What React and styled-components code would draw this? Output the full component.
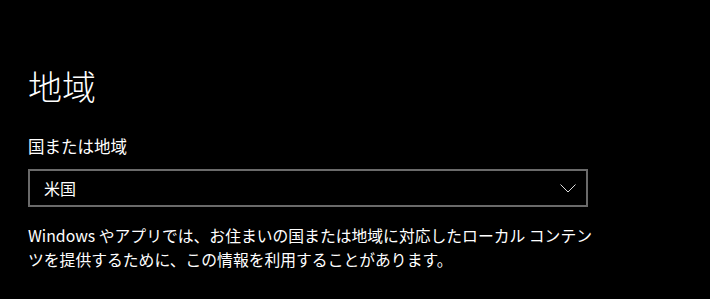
import React from "react";
import styled, { createGlobalStyle } from "styled-components";

const GlobalStyle = createGlobalStyle`
  html, body {
    margin: 0;
    padding: 0;
    background: #000;
  }
  body {
    font-family: "Noto Sans CJK JP", "Noto Sans", sans-serif;
    color: #fff;
  }
`;

const Page = styled.div`
  width: 710px;
  height: 299px;
  box-sizing: border-box;
  padding: 64px 0 0 28px;
  display: flex;
  flex-direction: column;
  overflow: hidden;
`;

const Title = styled.h1`
  margin: 0;
  font-size: 34px;
  font-weight: 300;
  line-height: 44px;
  color: #fff;
`;

const Label = styled.div`
  margin-top: 27px;
  font-size: 16.5px;
  line-height: 22px;
  color: #fff;
`;

const Select = styled.div`
  margin-top: 12px;
  width: 560px;
  height: 38px;
  box-sizing: border-box;
  border: 2px solid #6a6a6a;
  display: flex;
  align-items: center;
  justify-content: space-between;
  padding: 0 10px 0 14px;
  font-size: 16px;
  color: #fff;
`;

const Chevron = () => (
  <svg width="16" height="9" viewBox="0 0 16 9" fill="none">
    <path d="M0.5 0.5 L8 8 L15.5 0.5" stroke="#ddd" strokeWidth="1" />
  </svg>
);

const Note = styled.p`
  margin: 17px 0 0;
  width: 575px;
  font-size: 15.8px;
  line-height: 24px;
  color: #fff;
`;

export default function App() {
  return (
    <>
      <GlobalStyle />
      <Page>
        <Title>地域</Title>
        <Label>国または地域</Label>
        <Select>
          <span>米国</span>
          <Chevron />
        </Select>
        <Note>
          Windows やアプリでは、お住まいの国または地域に対応したローカル コンテンツを提供するために、この情報を利用することがあります。
        </Note>
      </Page>
    </>
  );
}
